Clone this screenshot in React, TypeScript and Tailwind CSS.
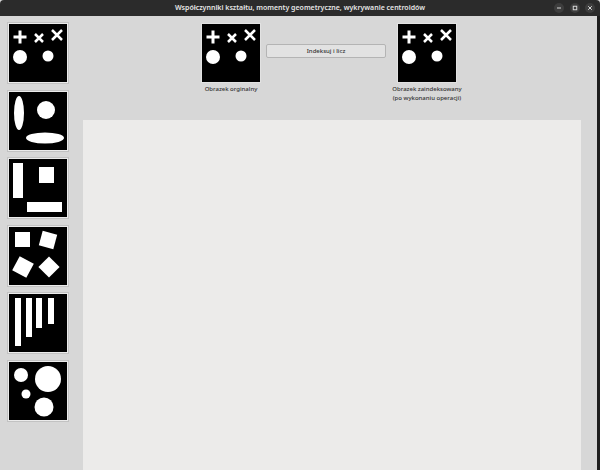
import React from 'react';

// Black sample pictures used both in the sidebar and in the preview slots
const Face = () => (
  <>
    <path d="M4.5 13H17.5M11 6.5V19.5" stroke="white" strokeWidth={3} />
    <path d="M26 10L34 18M34 10L26 18" stroke="white" strokeWidth={2.5} />
    <path d="M43 6L53 16M53 6L43 16" stroke="white" strokeWidth={2.5} />
    <circle cx={11} cy={33} r={7} fill="white" />
    <circle cx={39} cy={32} r={5.5} fill="white" />
  </>
);

const Ellipses = () => (
  <>
    <ellipse cx={10} cy={21} rx={5} ry={17} fill="white" />
    <circle cx={37} cy={18} r={9} fill="white" />
    <ellipse cx={36} cy={46} rx={19} ry={5.5} fill="white" />
  </>
);

const Rects = () => (
  <>
    <rect x={4} y={4} width={10} height={35} fill="white" />
    <rect x={30} y={8} width={15} height={16} fill="white" />
    <rect x={18} y={43} width={35} height={10} fill="white" />
  </>
);

const Squares = () => (
  <>
    <rect x={6} y={5} width={15} height={15} fill="white" />
    <rect x={31.5} y={5.5} width={15} height={15} fill="white" transform="rotate(15 39 13)" />
    <rect x={6} y={32} width={16} height={16} fill="white" transform="rotate(28 14 40)" />
    <rect x={32.5} y={32.5} width={15} height={15} fill="white" transform="rotate(45 40 40)" />
  </>
);

const Bars = () => (
  <>
    <rect x={6} y={4} width={6} height={48} fill="white" />
    <rect x={17} y={4} width={6} height={39} fill="white" />
    <rect x={27} y={4} width={6} height={30} fill="white" />
    <rect x={39} y={4} width={6} height={26} fill="white" />
  </>
);

const Circles = () => (
  <>
    <circle cx={12} cy={13} r={7} fill="white" />
    <circle cx={39} cy={17} r={13} fill="white" />
    <circle cx={17} cy={32} r={4.5} fill="white" />
    <circle cx={35} cy={45} r={9.5} fill="white" />
  </>
);

const shapes = [Face, Ellipses, Rects, Squares, Bars, Circles];

const Picture = ({ children }: { children: React.ReactNode }) => (
  <svg width={58} height={58} viewBox="0 0 58 58" className="block bg-black">
    {children}
  </svg>
);

const WindowButton = ({ children }: { children: React.ReactNode }) => (
  <span className="flex h-[10px] w-[10px] items-center justify-center rounded-full bg-[#3d3d3d]">
    <svg width={6} height={6} viewBox="0 0 6 6" fill="none" stroke="#d8d8d8" strokeWidth={1}>
      {children}
    </svg>
  </span>
);

export default function App() {
  const font = { fontFamily: '"Noto Sans", "DejaVu Sans", sans-serif' };

  return (
    <div className="flex h-[470px] w-[600px] flex-col overflow-hidden bg-[#d7d7d7]" style={font}>
      {/* Title bar */}
      <div className="relative flex h-[16px] shrink-0 items-center justify-center rounded-t-[4px] bg-[#2b2b2b]">
        <span className="text-[7px] font-semibold text-[#e6e6e6]">
          Współczynniki kształtu, momenty geometryczne, wykrywanie centroidów
        </span>
        <div className="absolute right-[5px] top-[3px] flex gap-[5.5px]">
          <WindowButton>
            <path d="M1 3H5" />
          </WindowButton>
          <WindowButton>
            <rect x={1.25} y={1.25} width={3.5} height={3.5} />
          </WindowButton>
          <WindowButton>
            <path d="M1.2 1.2L4.8 4.8M4.8 1.2L1.2 4.8" />
          </WindowButton>
        </div>
      </div>

      <div className="flex min-h-0 flex-1 border-r-[3px] border-[#1e1e1e]">
        {/* Sidebar with sample pictures */}
        <div className="flex w-[75px] shrink-0 flex-col gap-[5.6px] pl-[7px] pt-[6px]">
          {shapes.map((Shape, i) => (
            <button
              key={i}
              className="h-[62px] w-[62px] border border-[#c2c2c2] bg-[#ebebeb] p-px"
            >
              <Picture>
                <Shape />
              </Picture>
            </button>
          ))}
        </div>

        {/* Main area */}
        <div className="flex min-w-0 flex-1 flex-col">
          <div className="flex h-[104px] shrink-0 items-start pl-[121px] pt-[7px]">
            <div className="flex w-[70px] flex-col items-center">
              <div className="border border-[#e2e2e2]">
                <Picture>
                  <Face />
                </Picture>
              </div>
              <span className="mt-[2px] text-[6px] font-medium leading-[8px] text-[#333]">
                Obrazek orginalny
              </span>
            </div>
            <button className="mt-[21px] h-[14px] w-[120px] rounded-[2px] border border-[#b4b4b4] bg-[#e2e2e2] text-[6px] font-medium leading-none text-[#333]">
              Indeksuj i licz
            </button>
            <div className="ml-[6px] flex w-[70px] flex-col items-center">
              <div className="border border-[#e2e2e2]">
                <Picture>
                  <Face />
                </Picture>
              </div>
              <span className="mt-[2px] text-center text-[6px] font-medium leading-[8.5px] text-[#333]">
                Obrazek zaindeksowany
                <br />
                (po wykonaniu operacji)
              </span>
            </div>
          </div>

          <div className="ml-[8px] mr-[16px] flex-1 bg-[#ecebea]" />
        </div>
      </div>
    </div>
  );
}
